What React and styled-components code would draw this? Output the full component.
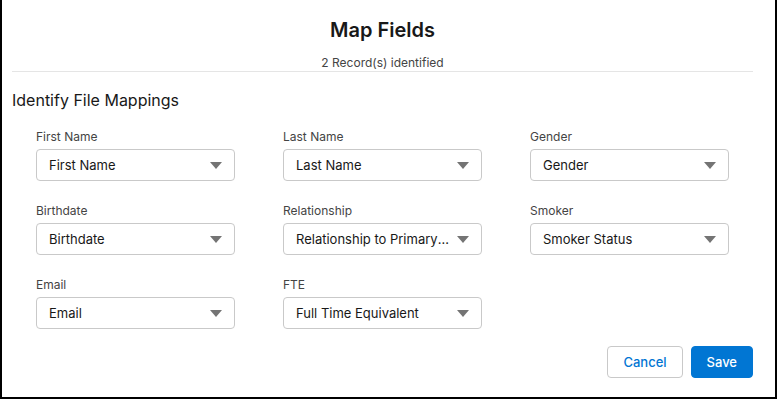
import React from "react";
import styled, { createGlobalStyle } from "styled-components";

const GlobalStyle = createGlobalStyle`
  html, body {
    margin: 0;
    padding: 0;
    background: #fff;
  }
  * {
    box-sizing: border-box;
  }
`;

const Frame = styled.div`
  width: 777px;
  height: 399px;
  border: 2px solid #000;
  border-top: none;
  background: #fff;
  font-family: Inter, "Noto Sans", Arial, sans-serif;
  color: #181818;
  display: flex;
  flex-direction: column;
`;

const Header = styled.header`
  margin: 0 22px 0 10px;
  padding-top: 18px;
  border-bottom: 1px solid #e5e5e5;
  text-align: center;
`;

const Title = styled.h1`
  margin: 0;
  font-size: 20px;
  line-height: 25px;
  font-weight: 600;
  color: #181818;
`;

const Subtitle = styled.div`
  margin-top: 12px;
  font-size: 12px;
  line-height: 16px;
  color: #444;
`;

const SectionTitle = styled.h2`
  margin: 18px 0 0 10px;
  font-size: 16px;
  line-height: 20px;
  font-weight: 400;
  color: #181818;
`;

const Grid = styled.div`
  display: grid;
  grid-template-columns: repeat(3, 199px);
  column-gap: 48px;
  row-gap: 22px;
  padding: 19px 0 0 34px;
`;

const Field = styled.div`
  display: flex;
  flex-direction: column;
`;

const Label = styled.label`
  font-size: 12px;
  line-height: 16px;
  color: #444;
  margin-bottom: 4px;
`;

const SelectBox = styled.div`
  height: 32px;
  border: 1px solid #c9c9c9;
  border-radius: 4px;
  background: #fff;
  display: flex;
  align-items: center;
  padding: 0 12px;
  gap: 8px;
`;

const SelectText = styled.span`
  flex: 1;
  font-size: 13px;
  color: #181818;
  white-space: nowrap;
  overflow: hidden;
  text-overflow: ellipsis;
`;

const Arrow = styled.span`
  width: 0;
  height: 0;
  border-left: 6px solid transparent;
  border-right: 6px solid transparent;
  border-top: 7px solid #747474;
  flex-shrink: 0;
`;

const Footer = styled.div`
  display: flex;
  justify-content: flex-end;
  gap: 8px;
  padding: 17px 22px 0 0;
`;

const Button = styled.button`
  height: 32px;
  padding: 0 15px;
  border-radius: 4px;
  font-family: inherit;
  font-size: 13px;
  font-weight: 500;
  cursor: pointer;
  border: 1px solid ${(p) => (p.$primary ? "#0176d3" : "#c9c9c9")};
  background: ${(p) => (p.$primary ? "#0176d3" : "#fff")};
  color: ${(p) => (p.$primary ? "#fff" : "#0176d3")};
`;

const fields = [
  { label: "First Name", value: "First Name" },
  { label: "Last Name", value: "Last Name" },
  { label: "Gender", value: "Gender" },
  { label: "Birthdate", value: "Birthdate" },
  { label: "Relationship", value: "Relationship to Primary Member" },
  { label: "Smoker", value: "Smoker Status" },
  { label: "Email", value: "Email" },
  { label: "FTE", value: "Full Time Equivalent" },
];

const App = () => {
  return (
    <>
      <GlobalStyle />
      <Frame>
        <Header>
          <Title>Map Fields</Title>
          <Subtitle>2 Record(s) identified</Subtitle>
        </Header>
        <SectionTitle>Identify File Mappings</SectionTitle>
        <Grid>
          {fields.map((f) => (
            <Field key={f.label}>
              <Label>{f.label}</Label>
              <SelectBox>
                <SelectText>{f.value}</SelectText>
                <Arrow />
              </SelectBox>
            </Field>
          ))}
        </Grid>
        <Footer>
          <Button>Cancel</Button>
          <Button $primary>Save</Button>
        </Footer>
      </Frame>
    </>
  );
};

export default App;
